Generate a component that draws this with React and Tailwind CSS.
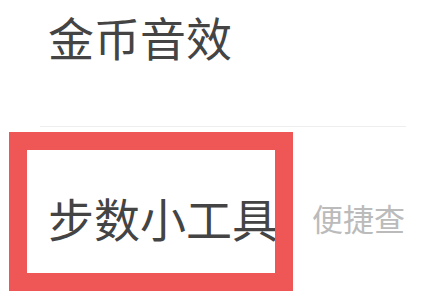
import React from "react";

const cjk = { fontFamily: '"Noto Sans CJK SC", "Noto Sans", sans-serif' };

export default function App() {
  return (
    <div className="relative h-[297px] w-[422px] overflow-hidden bg-white" style={cjk}>
      <div className="flex h-[126px] items-start pl-[48px] pt-[13px]">
        <span className="text-[46px] leading-none text-[#444444]">金币音效</span>
      </div>
      <div className="ml-[40px] mr-[16px] h-px bg-[#eeeeee]" />
      <div className="flex items-center pl-[48px] pt-[67px]">
        <span className="whitespace-nowrap text-[46px] leading-none text-[#444444]">步数小工具</span>
        <span className="ml-[34px] whitespace-nowrap text-[31px] leading-none text-[#bbbbbb]">便捷查</span>
      </div>
      <div className="absolute left-[9px] top-[132px] h-[159px] w-[284px] border-[18px] border-[#ef5656]" />
    </div>
  );
}
